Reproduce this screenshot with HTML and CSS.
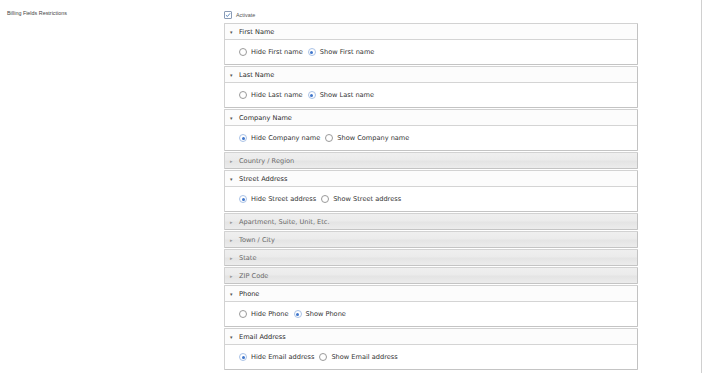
FILE: index.html
```html
<!DOCTYPE html>
<html lang="en">

<head>
    <meta charset="UTF-8">
    <meta name="viewport" content="width=device-width, initial-scale=1.0">
    <title>Billing Fields Restrictions</title>
    <link rel="stylesheet" href="styles.css">
</head>

<body>
    <div class="page">
        <div class="setting-row">
            <div class="setting-label">Billing Fields Restrictions</div>
            <div class="setting-field">
                <label class="activate">
                    <span class="checkbox">
                        <svg viewBox="0 0 8 8" width="6" height="6">
                            <path d="M1.2 4.2 L3.2 6 L6.8 1.8" fill="none" stroke="#3a6fb0" stroke-width="1.1" />
                        </svg>
                    </span>
                    Activate
                </label>

                <div class="accordion">
                    <div class="section open">
                        <div class="section-head"><span class="arrow">&#9662;</span>First Name</div>
                        <div class="section-body">
                            <span class="radio"></span><span class="radio-label">Hide First name</span>
                            <span class="radio checked"></span><span class="radio-label">Show First name</span>
                        </div>
                    </div>

                    <div class="section open">
                        <div class="section-head"><span class="arrow">&#9662;</span>Last Name</div>
                        <div class="section-body">
                            <span class="radio"></span><span class="radio-label">Hide Last name</span>
                            <span class="radio checked"></span><span class="radio-label">Show Last name</span>
                        </div>
                    </div>

                    <div class="section open">
                        <div class="section-head"><span class="arrow">&#9662;</span>Company Name</div>
                        <div class="section-body">
                            <span class="radio checked"></span><span class="radio-label">Hide Company name</span>
                            <span class="radio"></span><span class="radio-label">Show Company name</span>
                        </div>
                    </div>

                    <div class="section">
                        <div class="section-head"><span class="arrow">&#9656;</span>Country / Region</div>
                    </div>

                    <div class="section open">
                        <div class="section-head"><span class="arrow">&#9662;</span>Street Address</div>
                        <div class="section-body">
                            <span class="radio checked"></span><span class="radio-label">Hide Street address</span>
                            <span class="radio"></span><span class="radio-label">Show Street address</span>
                        </div>
                    </div>

                    <div class="section">
                        <div class="section-head"><span class="arrow">&#9656;</span>Apartment, Suite, Unit, Etc.</div>
                    </div>

                    <div class="section">
                        <div class="section-head"><span class="arrow">&#9656;</span>Town / City</div>
                    </div>

                    <div class="section">
                        <div class="section-head"><span class="arrow">&#9656;</span>State</div>
                    </div>

                    <div class="section">
                        <div class="section-head"><span class="arrow">&#9656;</span>ZIP Code</div>
                    </div>

                    <div class="section open">
                        <div class="section-head"><span class="arrow">&#9662;</span>Phone</div>
                        <div class="section-body">
                            <span class="radio"></span><span class="radio-label">Hide Phone</span>
                            <span class="radio checked"></span><span class="radio-label">Show Phone</span>
                        </div>
                    </div>

                    <div class="section open">
                        <div class="section-head"><span class="arrow">&#9662;</span>Email Address</div>
                        <div class="section-body">
                            <span class="radio checked"></span><span class="radio-label">Hide Email address</span>
                            <span class="radio"></span><span class="radio-label">Show Email address</span>
                        </div>
                    </div>
                </div>
            </div>
        </div>
    </div>
</body>

</html>
```

FILE: styles.css
```css
/* Общие стили страницы */
body {
    margin: 0;
    background-color: #fff;
    font-family: "DejaVu Sans", Verdana, sans-serif;
    color: #333;
}

.page {
    height: 373px;
    box-sizing: border-box;
    border-right: 1px solid #d0d0d0;
    padding: 9px 0 0 7px;
    overflow: hidden;
}

.setting-row {
    display: flex;
}

.setting-label {
    width: 217px;
    font-family: "Liberation Sans", Arial, sans-serif;
    font-size: 5.4px;
    color: #444;
    padding-top: 1px;
}

.setting-field {
    width: 414px;
}

/* Чекбокс "Activate" */
.activate {
    display: flex;
    align-items: center;
    gap: 4px;
    height: 8px;
    margin-top: 2px;
    font-family: "Liberation Sans", Arial, sans-serif;
    font-size: 5.4px;
    color: #555;
}

.checkbox {
    width: 6px;
    height: 6px;
    border: 1px solid #8a9bb5;
    border-radius: 1px;
    display: flex;
    align-items: center;
    justify-content: center;
    background-color: #fff;
}

/* Аккордеон */
.accordion {
    display: flex;
    flex-direction: column;
    gap: 1px;
    margin-top: 4px;
}

.section {
    border: 1px solid #d2d2d2;
    border-right-color: #c2c2c2;
    border-bottom-color: #c4c4c4;
    border-radius: 1px;
}

.section-head {
    height: 15px;
    display: flex;
    align-items: center;
    padding-left: 5px;
    font-size: 6.6px;
    color: #6a6a6a;
    background: linear-gradient(#efefef 0%, #ebebeb 45%, #e4e4e4 55%, #ececec 100%);
}

.section.open .section-head {
    color: #2b2b2b;
    background: #fcfcfc;
    border-bottom: 1px solid #d4d4d4;
}

.arrow {
    width: 9px;
    font-size: 5px;
    color: #999;
}

.section.open .arrow {
    color: #555;
}

.section-body {
    height: 24px;
    display: flex;
    align-items: center;
    padding-left: 14px;
    background-color: #fff;
    font-size: 6.6px;
    color: #333;
}

/* Радиокнопки */
.radio {
    width: 6px;
    height: 6px;
    border: 1px solid #9a9a9a;
    border-radius: 50%;
    background-color: #fff;
    position: relative;
    margin-right: 4px;
}

.radio.checked {
    border-color: #a9c2e6;
}

.radio.checked::after {
    content: "";
    position: absolute;
    left: 1.5px;
    top: 1.5px;
    width: 3px;
    height: 3px;
    border-radius: 50%;
    background-color: #3f76cc;
}

.radio-label {
    margin-right: 5px;
}
```
